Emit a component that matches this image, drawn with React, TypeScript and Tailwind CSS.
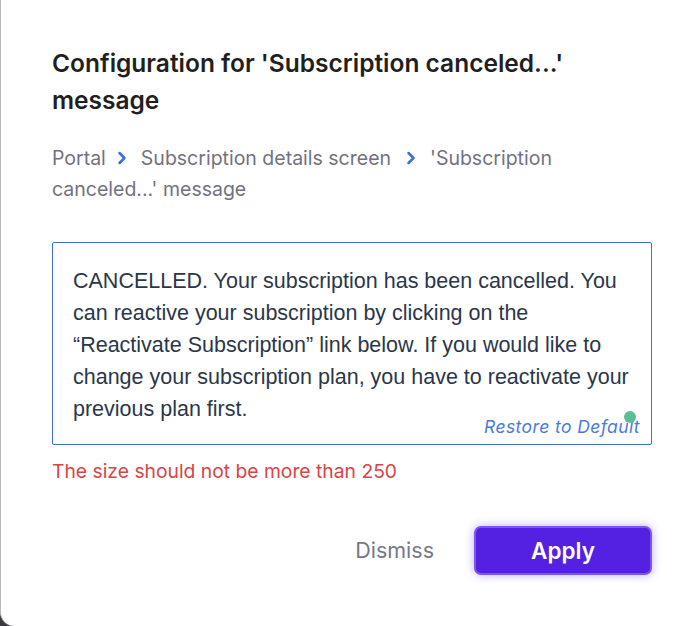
import { ChevronRight } from 'lucide-react'

export default function App() {
  return (
    <div className="w-[698px] h-[626px] bg-[#3a3a40] overflow-hidden" style={{ fontFamily: 'Inter, sans-serif' }}>
      <div className="h-full bg-white border-l border-[#b8b8bc] rounded-bl-[14px] pl-[51px] pr-[46px] pt-[45px]">
        <h2 className="text-[24.5px] leading-[37px] font-semibold text-[#1f1f22]">
          Configuration for 'Subscription canceled...' message
        </h2>

        <p className="mt-[24px] text-[19.5px] leading-[31px] text-[#72727f]">
          Portal
          <ChevronRight className="inline-block w-[20px] h-[20px] ml-[6px] mr-[9px] text-[#3d6fd8] align-[-3px]" strokeWidth={3} />
          Subscription details screen
          <ChevronRight className="inline-block w-[20px] h-[20px] ml-[10px] mr-[9px] text-[#3d6fd8] align-[-3px]" strokeWidth={3} />
          'Subscription canceled...' message
        </p>

        <div className="relative mt-[37px] border-[1.5px] border-[#3e6fd1] rounded-[2px] pl-[20px] pr-[12px] pt-[22px] pb-[19px]">
          <p
            className="text-[21.5px] leading-[32px] text-[#2b3748]"
            style={{ fontFamily: '"Liberation Sans", Arial, sans-serif' }}
          >
            CANCELLED. Your subscription has been cancelled. You can reactive your subscription by clicking on the
            “Reactivate Subscription” link below. If you would like to change your subscription plan, you have to
            reactivate your previous plan first.
          </p>
          <div className="absolute right-[11px] bottom-[5px] text-[17.5px] leading-[24px] italic text-[#4a7bd8] tracking-[0.4px]">
            Restore to Default
            <span className="absolute right-[4px] top-[-4px] w-[12px] h-[12px] rounded-full bg-[#5cbf94]" />
          </div>
        </div>

        <p className="mt-[14px] text-[19.3px] leading-[24px] text-[#d64545]">
          The size should not be more than 250
        </p>

        <div className="mt-[43px] flex items-center justify-end gap-[40px]">
          <button className="text-[21.5px] text-[#77778a]">Dismiss</button>
          <button className="w-[178px] h-[49px] rounded-[7px] bg-[#5420e2] border-2 border-[#7a55ee] text-white text-[22.5px] font-semibold shadow-[0_0_10px_rgba(110,70,240,0.45)]">
            Apply
          </button>
        </div>
      </div>
    </div>
  )
}
